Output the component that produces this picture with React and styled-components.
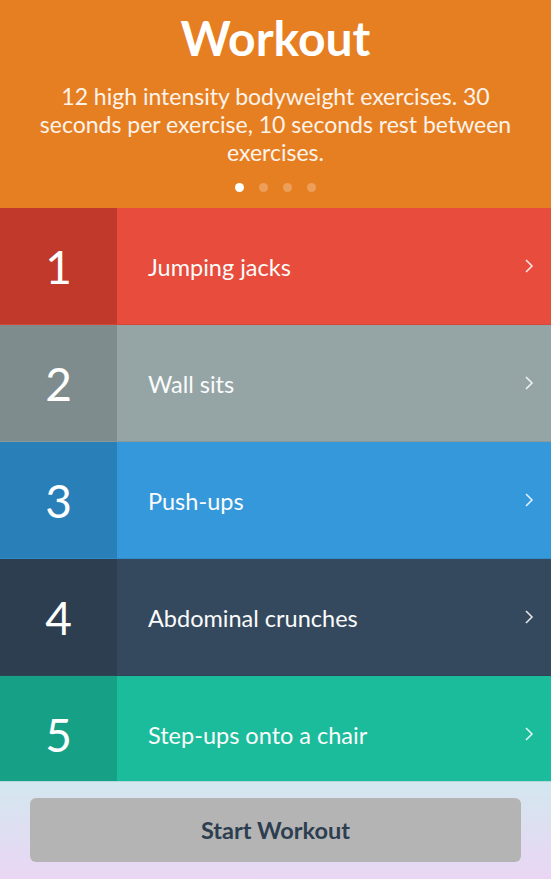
import React from "react";
import styled, { createGlobalStyle } from "styled-components";

const GlobalStyle = createGlobalStyle`
  html, body {
    margin: 0;
    padding: 0;
    height: 100%;
  }
  #root {
    height: 100%;
  }
  * {
    box-sizing: border-box;
  }
`;

const Screen = styled.div`
  width: 100%;
  height: 100vh;
  display: flex;
  flex-direction: column;
  overflow: hidden;
  font-family: "Lato", "Open Sans", sans-serif;
`;

const Header = styled.header`
  flex: 0 0 208px;
  background-color: #e67f22;
  display: flex;
  flex-direction: column;
  align-items: center;
  padding: 10px 32px 15px;
  color: #ffffff;
  text-align: center;
`;

const Title = styled.h1`
  margin: 0;
  font-size: 48px;
  line-height: 56px;
  font-weight: 700;
`;

const Description = styled.p`
  margin: 16px 0 0;
  font-size: 23px;
  line-height: 28px;
  font-weight: 400;
  color: #fdf3ea;
`;

const Dots = styled.div`
  display: flex;
  gap: 15px;
  margin-top: 17px;
`;

const Dot = styled.span`
  width: 9px;
  height: 9px;
  border-radius: 50%;
  background-color: ${(p) => (p.$active ? "#ffffff" : "rgba(255,255,255,0.25)")};
`;

const List = styled.div`
  flex: 1;
  overflow: hidden;
  display: flex;
  flex-direction: column;
`;

const Row = styled.div`
  flex: 0 0 117px;
  display: flex;
  background-color: ${(p) => p.$color};
  border-bottom: 1px solid rgba(0, 0, 0, 0.08);
  color: #ffffff;
`;

const Number = styled.div`
  width: 117px;
  display: flex;
  align-items: center;
  justify-content: center;
  background-color: ${(p) => p.$shade};
  font-size: 46px;
  font-weight: 400;
`;

const Name = styled.div`
  flex: 1;
  display: flex;
  align-items: center;
  padding-left: 31px;
  padding-top: 2px;
  font-size: 23.5px;
  color: #fbfbfb;
`;

const Chevron = styled.svg`
  width: 11px;
  height: 16px;
  margin-right: 17px;
  flex-shrink: 0;
  align-self: center;
`;

const Footer = styled.footer`
  flex: 0 0 97px;
  padding: 16px 30px 17px;
  background: linear-gradient(180deg, #d3e7ef 0%, #ead6f4 100%);
  border-top: 1px solid #b7d7df;
`;

const StartButton = styled.button`
  width: 100%;
  height: 64px;
  border: none;
  border-radius: 6px;
  background-color: #b4b4b4;
  color: #2c3e50;
  font-family: "Lato", "Open Sans", sans-serif;
  font-size: 23.5px;
  font-weight: 700;
  cursor: pointer;
`;

const exercises = [
  { name: "Jumping jacks", color: "#e74c3c", shade: "#c0392b" },
  { name: "Wall sits", color: "#95a5a6", shade: "#7f8c8d" },
  { name: "Push-ups", color: "#3498db", shade: "#2980b9" },
  { name: "Abdominal crunches", color: "#34495e", shade: "#2c3e50" },
  { name: "Step-ups onto a chair", color: "#1abc9c", shade: "#16a085" },
];

const App = () => {
  return (
    <>
      <GlobalStyle />
      <Screen>
        <Header>
          <Title>Workout</Title>
          <Description>
            12 high intensity bodyweight exercises. 30 seconds per exercise, 10
            seconds rest between exercises.
          </Description>
          <Dots>
            <Dot $active />
            <Dot />
            <Dot />
            <Dot />
          </Dots>
        </Header>
        <List>
          {exercises.map((ex, i) => (
            <Row key={ex.name} $color={ex.color}>
              <Number $shade={ex.shade}>{i + 1}</Number>
              <Name>{ex.name}</Name>
              <Chevron viewBox="0 0 11 16">
                <polyline
                  points="3,2 9,8 3,14"
                  fill="none"
                  stroke="rgba(255,255,255,0.85)"
                  strokeWidth="1.6"
                />
              </Chevron>
            </Row>
          ))}
        </List>
        <Footer>
          <StartButton>Start Workout</StartButton>
        </Footer>
      </Screen>
    </>
  );
};

export default App;
